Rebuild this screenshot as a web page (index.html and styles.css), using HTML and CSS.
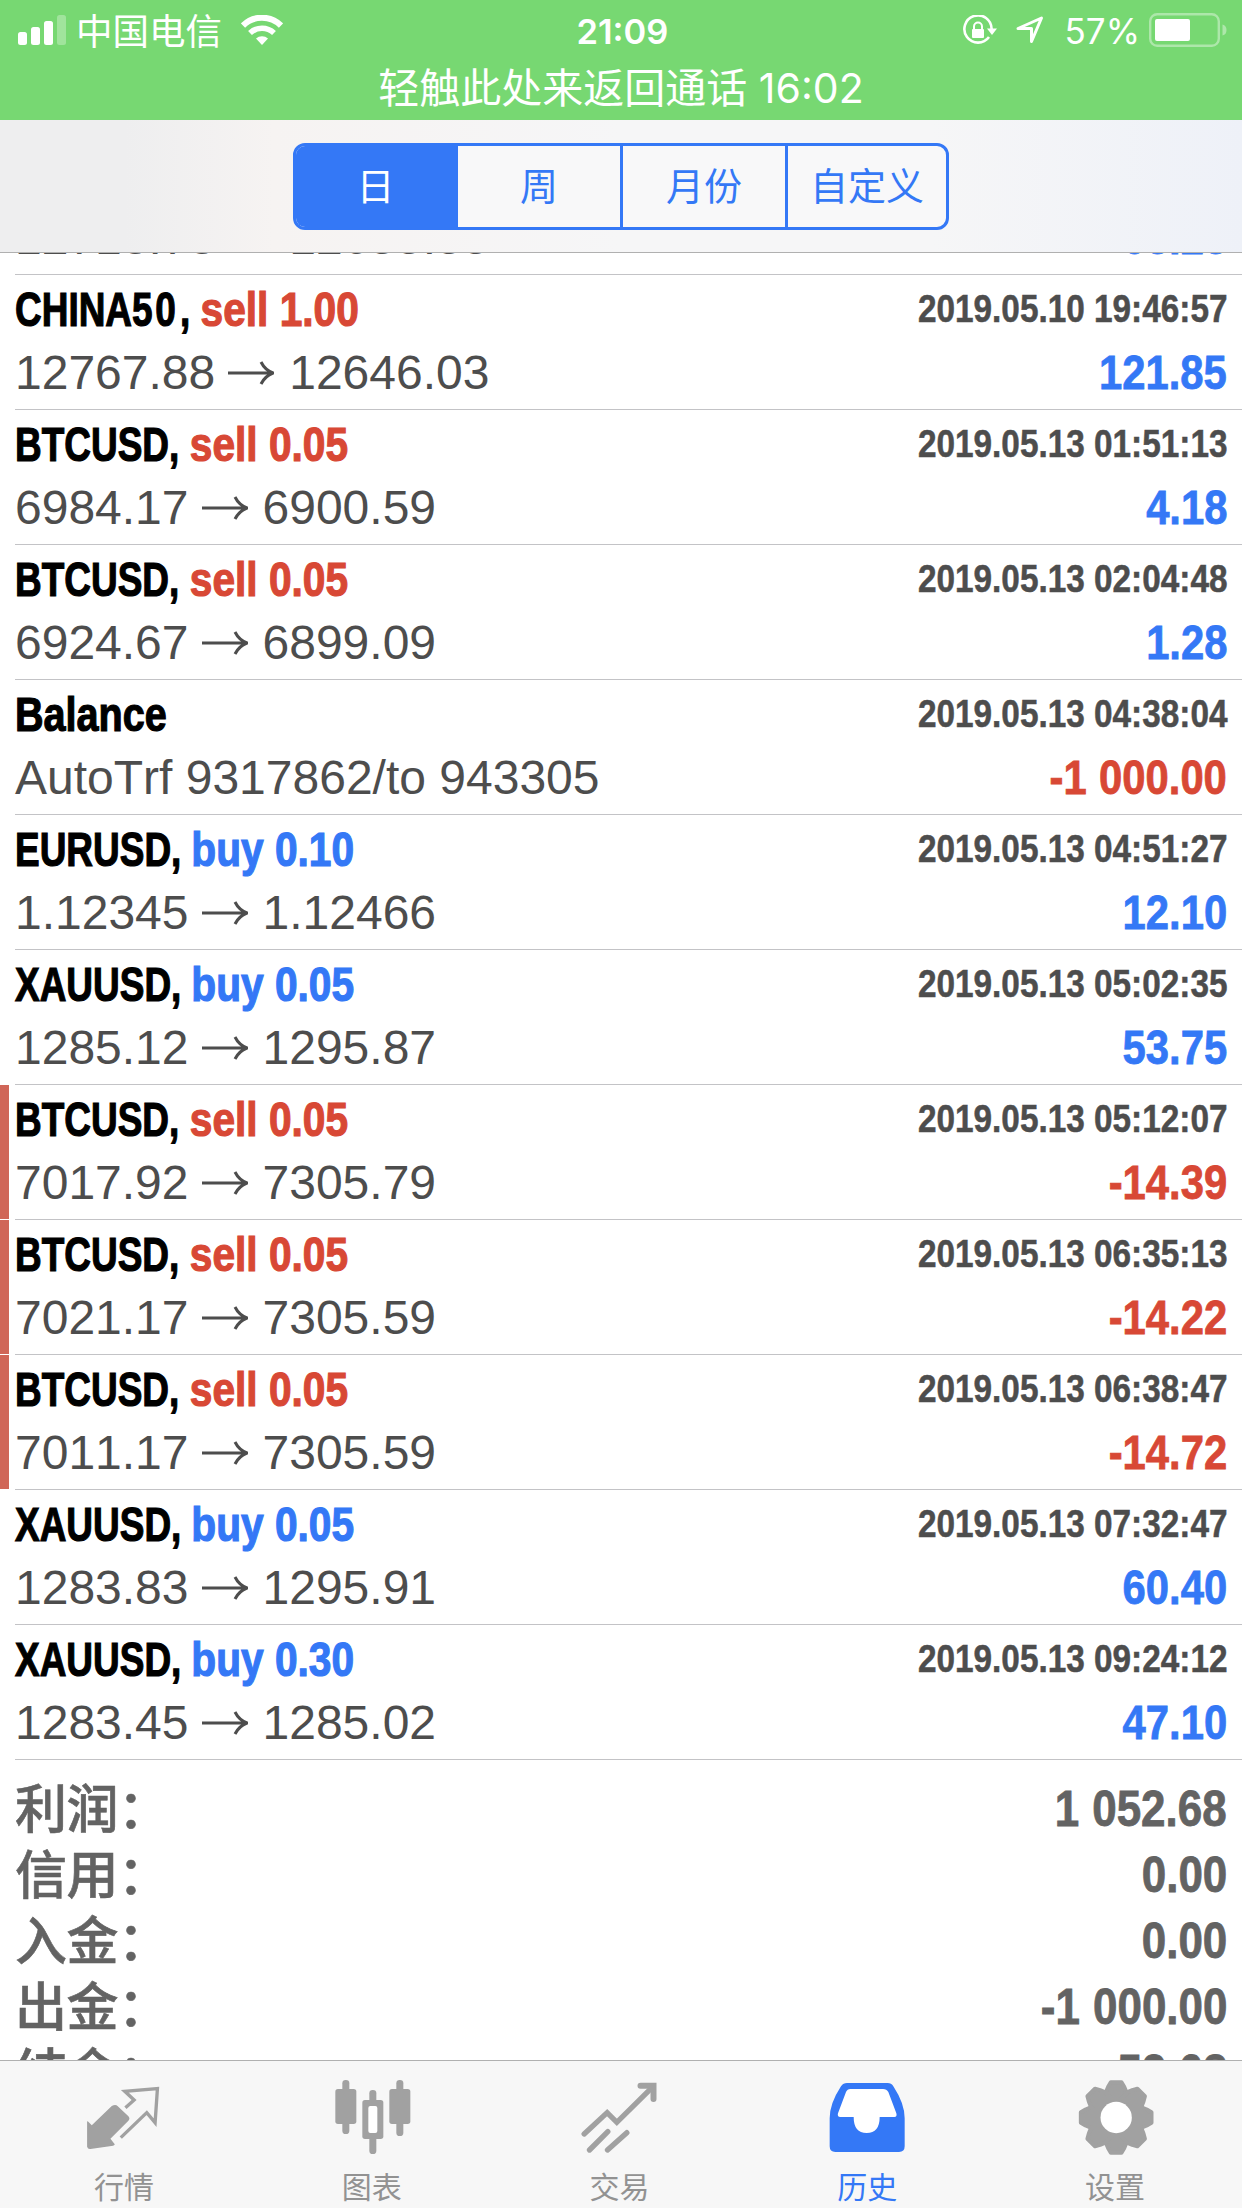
FILE: index.html
```html
<!DOCTYPE html>
<html lang="zh-CN">
	<head>
		<meta charset="UTF-8" />
		<meta name="viewport" content="width=device-width, initial-scale=1.0" />
		<title>历史</title>
		<link rel="stylesheet" href="styles.css">
	</head>
	<body>
		<div class="status-bar">
			<div class="status-row">
				<div class="status-left">
					<svg class="signal" width="48" height="30" viewBox="0 0 48 30" fill="#fff">
						<rect x="0" y="17" width="9" height="13" rx="2.5" />
						<rect x="13" y="12" width="9" height="18" rx="2.5" />
						<rect x="26" y="6" width="9" height="24" rx="2.5" />
						<rect x="39" y="0" width="9" height="30" rx="2.5" opacity="0.3" />
					</svg>
					<span class="carrier">中国电信</span>
					<svg class="wifi" width="42" height="30" viewBox="0 0 42 30">
						<path d="M2 10.5a27 27 0 0 1 38 0" fill="none" stroke="#fff" stroke-width="6" />
						<path d="M9 18a17.5 17.5 0 0 1 24 0" fill="none" stroke="#fff" stroke-width="5.6" />
						<path d="M15 23.6a9 9 0 0 1 12 0L21 30z" fill="#fff" />
					</svg>
				</div>
				<div class="clock">21:09</div>
				<div class="status-right">
					<svg class="lock" width="34" height="30" viewBox="0 0 34 30">
						<path d="M26 22a13.6 13.6 0 1 1 2.6-8" fill="none" stroke="#fff" stroke-width="2.6" />
						<path d="M24 13.5h10l-5 6.5z" fill="#fff" />
						<rect x="9" y="14" width="12" height="9" rx="1" fill="#fff" />
						<path d="M11 14.500v-3a4 4 0 0 1 8 0v3" fill="none" stroke="#fff" stroke-width="2" />
					</svg>
					<svg class="location" width="28" height="28" viewBox="0 0 28 28">
						<path d="M2 12.500L25.500 2 15.500 25.500V12.500z" fill="none" stroke="#fff" stroke-width="3" stroke-linejoin="round" />
					</svg>
					<span class="percent">57%</span>
					<svg class="battery" width="78" height="34" viewBox="0 0 78 34">
						<rect x="1.200" y="1.200" width="68.600" height="31.600" rx="7" fill="none" stroke="#fff" stroke-width="2.400" opacity="0.4" />
						<path d="M73.500 11.500q4 1 4 5.500t-4 5.500z" fill="#fff" opacity="0.4" />
						<rect x="6" y="6" width="35" height="22" rx="2" fill="#fff" />
					</svg>
				</div>
			</div>
			<div class="call-row">轻触此处来返回通话 16:02</div>
		</div>

		<div class="nav-bar">
			<div class="segmented">
				<div class="segment active">日</div>
				<div class="segment">周</div>
				<div class="segment">月份</div>
				<div class="segment">自定义</div>
			</div>
		</div>

		<div class="content">
			<div class="list" id="deals"></div>
			<div class="summary">
				<div class="summary-row"><span class="label">利润：</span><span class="sum">1 052.68</span></div>
				<div class="summary-row"><span class="label">信用：</span><span class="sum">0.00</span></div>
				<div class="summary-row"><span class="label">入金：</span><span class="sum">0.00</span></div>
				<div class="summary-row"><span class="label">出金：</span><span class="sum">-1 000.00</span></div>
				<div class="summary-row"><span class="label">结余：</span><span class="sum">52.68</span></div>
			</div>
		</div>

		<div class="tab-bar">
			<div class="tab">
				<svg viewBox="41.700 27 240 240">
					<path d="M53 163l12 12 60-58q12-6 18 1l32 30q6 7 0 13l-54 54 13 17q0 3-5 4l-68 10q-8 1-10-7V165q0-3 2-2z" fill="#a1a1a1" />
					<path d="M166 122l26-23-28-26 98-8-7 102-25-30-78 75" fill="none" stroke="#a1a1a1" stroke-width="10" />
				</svg>
				<span>行情</span>
			</div>
			<div class="tab">
				<svg viewBox="785 30 240 240" fill="#a1a1a1">
					<rect x="795" y="69" width="63" height="105" rx="8" />
					<rect x="816" y="42" width="21" height="162" rx="10" />
					<rect x="957" y="69" width="63" height="105" rx="8" />
					<rect x="978" y="42" width="21" height="168" rx="10" />
					<rect x="897" y="72" width="21" height="192" rx="10" />
					<rect x="876" y="102" width="63" height="117" rx="8" />
					<rect x="894" y="120" width="27" height="81" rx="6" fill="#fff" />
				</svg>
				<span>图表</span>
			</div>
			<div class="tab">
				<svg viewBox="28.500 28 240 240" fill="none" stroke="#a1a1a1" stroke-width="16" stroke-linecap="round">
					<path d="M44 202l69-64 29 29L248 62" />
					<path d="M213 57h39v40" stroke-width="18" />
					<path d="M60 250l55-55M114 250l58-52" />
				</svg>
				<span>交易</span>
			</div>
			<div class="tab active">
				<svg viewBox="772 30 240 240">
					<path d="M832 51h122q11 0 17 10 34 52 34 96v84q0 17-17 17H797q-17 0-17-17v-84q0-44 34-96 7-10 18-10z" fill="#3478f6" />
					<path d="M842 69h98q11 0 16 9l24 64q3 11-6 11h-44q0 48-39 48t-39-48h-40q-10 0-7-11l24-64q4-9 13-9z" fill="#fff" />
				</svg>
				<span>历史</span>
			</div>
			<div class="tab">
				<svg viewBox="46 108 240 240">
					<g transform="translate(169.500 232.500)" fill="#a1a1a1" stroke="#a1a1a1" stroke-width="12" stroke-linejoin="round">
						<circle r="80" />
						<path id="teeth" d="M-16-106h32l8 14 6 14v156l-6 14-8 14h-32l-8-14-6-14V-78l6-14z" />
						<use href="#teeth" transform="rotate(45)" />
						<use href="#teeth" transform="rotate(90)" />
						<use href="#teeth" transform="rotate(135)" />
						<circle r="47" fill="#fff" stroke="none" />
					</g>
				</svg>
				<span>设置</span>
			</div>
		</div>

		<script>
			const deals = [
				['CHINA50', 'sell', '1.00', '2019.05.10 19:40:12', '12718.78', '12655.55', '63.23'],
				['CHINA50', 'sell', '1.00', '2019.05.10 19:46:57', '12767.88', '12646.03', '121.85'],
				['BTCUSD', 'sell', '0.05', '2019.05.13 01:51:13', '6984.17', '6900.59', '4.18'],
				['BTCUSD', 'sell', '0.05', '2019.05.13 02:04:48', '6924.67', '6899.09', '1.28'],
				['Balance', '', '', '2019.05.13 04:38:04', 'AutoTrf 9317862/to 943305', '', '-1 000.00'],
				['EURUSD', 'buy', '0.10', '2019.05.13 04:51:27', '1.12345', '1.12466', '12.10'],
				['XAUUSD', 'buy', '0.05', '2019.05.13 05:02:35', '1285.12', '1295.87', '53.75'],
				['BTCUSD', 'sell', '0.05', '2019.05.13 05:12:07', '7017.92', '7305.79', '-14.39'],
				['BTCUSD', 'sell', '0.05', '2019.05.13 06:35:13', '7021.17', '7305.59', '-14.22'],
				['BTCUSD', 'sell', '0.05', '2019.05.13 06:38:47', '7011.17', '7305.59', '-14.72'],
				['XAUUSD', 'buy', '0.05', '2019.05.13 07:32:47', '1283.83', '1295.91', '60.40'],
				['XAUUSD', 'buy', '0.30', '2019.05.13 09:24:12', '1283.45', '1285.02', '47.10'],
			];

			const arrow = '<svg class="arrow" width="46" height="26" viewBox="0 0 46 26"><path d="M0 13h44M33 2q4 8 12 11-8 3-12 11" /></svg>';

			document.getElementById('deals').innerHTML = deals
				.map(([symbol, side, volume, time, open, close, profit]) => {
					const negative = profit.startsWith('-');
					const name = symbol.replace(/\d+/, '<span class="digits">$&</span>');
					const title = side ? `${name}, <span class="${side}">${side} ${volume}</span>` : `<span class="balance">${name}</span>`;
					return `
						<div class="deal ${side && negative ? 'stopped' : ''}">
							<div class="line top"><div class="title">${title}</div><div class="time">${time}</div></div>
							<div class="line"><div class="prices">${close ? open + arrow + close : open}</div><div class="profit ${negative ? 'negative' : ''}">${profit}</div></div>
						</div>`;
				})
				.join('');
		</script>
	</body>
</html>
```
FILE: styles.css
```css
* {
	box-sizing: border-box;
}
body {
	display: flex;
	flex-direction: column;
	height: 2208px;
	margin: 0;
	overflow: hidden;
	background: #fff;
	font-family: 'Liberation Sans', 'Noto Sans CJK SC', sans-serif;
	font-kerning: none;
}

/* status bar */
.status-bar {
	height: 120px;
	flex: none;
	background: #77d872;
	color: #fff;
	font-family: Inter, 'Noto Sans CJK SC', sans-serif;
}
.status-row {
	display: grid;
	grid-template-columns: 1fr auto 1fr;
	align-items: center;
	height: 60px;
	padding: 0 15px 0 18px;
}
.status-left,
.status-right {
	display: flex;
	align-items: center;
}
.status-right {
	justify-content: flex-end;
}
.carrier {
	margin: 3px 19px 0 10px;
	font-size: 36.5px;
	line-height: 40px;
}
.clock {
	font-size: 34.5px;
	font-weight: 600;
	padding-top: 2px;
}
.location {
	margin: 0 21px 0 19px;
}
.percent {
	margin-right: 9px;
	font-size: 35px;
	padding-top: 2px;
}
.call-row {
	font-size: 41px;
	line-height: 56px;
	text-align: center;
}

/* period switch */
.nav-bar {
	display: flex;
	justify-content: center;
	align-items: center;
	flex: none;
	height: 133px;
	border-bottom: 1px solid #b0b0b0;
	background: linear-gradient(to right, #eeeeef 0%, #eeeeef 10%, #f6f3f2 22%, #f6f6f7 50%, #f6f6f7 75%, #eef1f8 100%);
}
.segmented {
	display: grid;
	grid-template-columns: 162px 165px 165px 158px;
	width: 656px;
	height: 87px;
	border: 3px solid #3478f6;
	border-radius: 12px;
	overflow: hidden;
	background: #f8f8f9;
}
.segment {
	border-right: 3px solid #3478f6;
	color: #3478f6;
	font-size: 38px;
	line-height: 83px;
	text-align: center;
}
.segment:last-child {
	border-right: 0;
}
.segment.active {
	background: #3478f6;
	color: #fff;
}

/* deals */
.content {
	flex: 1;
	min-height: 0;
	overflow: hidden;
}
.list {
	margin-top: -113px;
}
.deal {
	position: relative;
	height: 135px;
	margin-left: 15px;
	padding-right: 15px;
	border-bottom: 1px solid #c3c3c6;
}
.deal.stopped::before {
	content: '';
	position: absolute;
	left: -15px;
	top: 0;
	width: 9px;
	height: 134px;
	background: #d06658;
}
.line {
	display: flex;
	justify-content: space-between;
	font-size: 48px;
	line-height: 57px;
	white-space: nowrap;
}
.line.top {
	line-height: 69px;
}
.title {
	font-weight: bold;
	color: #000;
	transform: scaleX(0.77);
	transform-origin: left;
	-webkit-text-stroke: 1.2px;
}
.digits {
	margin-right: 2px;
	letter-spacing: 3.5px;
}
.sell,
.buy,
.balance {
	display: inline-block;
	transform: scaleX(1.1);
	transform-origin: left;
}
.balance {
	transform: scaleX(1.07);
}
.sell {
	color: #d84835;
}
.buy {
	color: #3478f6;
}
.time {
	color: #4d4d4d;
	font-size: 38.5px;
	font-weight: bold;
	line-height: 67px;
	transform: scaleX(0.866);
	transform-origin: right;
	-webkit-text-stroke: 0.5px;
}
.prices {
	color: #4d4d4d;
}
.arrow {
	margin: 0 15px 3px 13px;
	fill: none;
	stroke: #4d4d4d;
	stroke-width: 3;
}
.profit,
.sum {
	font-weight: bold;
	word-spacing: 1px;
	transform: scaleX(0.87);
	transform-origin: right;
	-webkit-text-stroke: 0.8px;
}
.profit {
	color: #3478f6;
}
.profit.negative {
	color: #d84835;
}

/* totals */
.summary {
	padding: 16px 15px 0;
	color: #636363;
	font-size: 52px;
}
.summary-row {
	display: flex;
	justify-content: space-between;
	height: 66px;
	line-height: 66px;
}
.label {
	margin-top: -3px;
	font-family: 'Noto Sans CJK SC', sans-serif;
	font-weight: 500;
	letter-spacing: -0.5px;
	-webkit-text-stroke: 0.6px;
}
.sum {
	font-size: 50.5px;
}

/* tabs */
.tab-bar {
	display: grid;
	grid-template-columns: repeat(5, 1fr);
	flex: none;
	height: 148px;
	padding: 15px 3px 0 0;
	border-top: 1px solid #b0b0b0;
	background: #f7f7f7;
}
.tab {
	display: flex;
	flex-direction: column;
	align-items: center;
	color: #929292;
	font-size: 30px;
	line-height: 34px;
}
.tab svg {
	width: 80px;
	height: 80px;
	margin-bottom: 15px;
}
.tab.active {
	color: #3478f6;
}
```
